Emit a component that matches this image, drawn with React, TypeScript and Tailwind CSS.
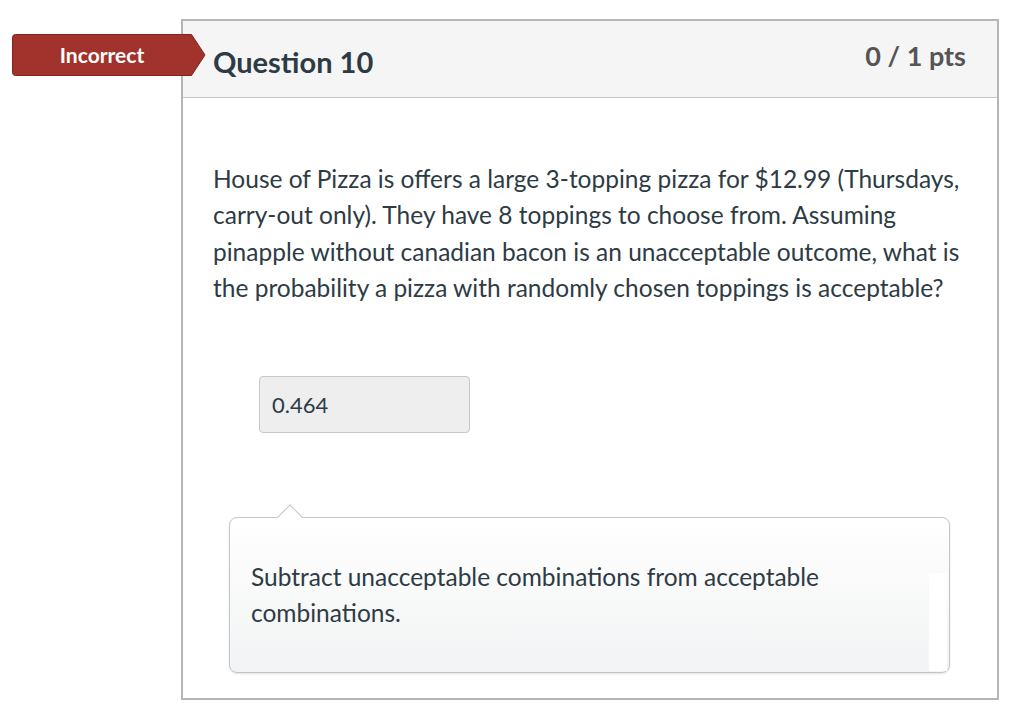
import React from 'react'

const QuestionCard: React.FC = () => {
  return (
    <div className="relative ml-[181px] mt-[18px] h-[681px] w-[818px] border-2 border-[#b5b5b5] bg-white">
      {/* Incorrect badge */}
      <div className="absolute -left-[171px] top-[13px] h-[42px] w-[194px]">
        <svg className="absolute inset-0" width="194" height="42" viewBox="0 0 194 42">
          <path
            d="M3.5 0.5 H179.5 L193 21 L179.5 41.5 H3.5 Q0.5 41.5 0.5 38.5 V3.5 Q0.5 0.5 3.5 0.5 Z"
            fill="#a2322c"
            stroke="#82231f"
            strokeWidth="1"
          />
        </svg>
        <div className="relative flex h-full w-[180px] items-center justify-center text-[21px] font-bold text-white">
          Incorrect
        </div>
      </div>

      {/* Header */}
      <div className="flex h-[77px] items-start justify-between border-b border-[#c4c4c4] bg-[#f5f5f5] pl-[30px] pr-[31px]">
        <h2 className="mt-[23px] text-[29px] font-bold leading-[36px] text-[#2d3b45]">Question 10</h2>
        <div className="mt-[17px] text-[27px] font-bold leading-[36px] text-[#555555]">0 / 1 pts</div>
      </div>

      {/* Body */}
      <div className="pl-[30px] pr-[30px] pt-[63px]">
        <p className="text-[24.5px] leading-[36.3px] text-[#2d3b45]">
          House of Pizza is offers a large 3-topping pizza for $12.99 (Thursdays, carry-out only). They have 8
          toppings to choose from. Assuming pinapple without canadian bacon is an unacceptable outcome, what is the
          probability a pizza with randomly chosen toppings is acceptable?
        </p>

        <div className="ml-[46px] mt-[70px] flex h-[57px] w-[211px] items-center rounded-[4px] border border-[#c8c8c8] bg-[#eeeeee] px-[12px] text-[22px] text-[#2d3b45]">
          0.464
        </div>

        {/* Comment */}
        <div className="relative ml-[16px] mt-[84px] w-[721px] rounded-[8px] border border-[#bfc6cc] bg-gradient-to-b from-white to-[#f2f3f4] pb-[40px] pl-[21px] pr-[21px] pt-[41px] shadow-[0_1px_2px_rgba(0,0,0,0.12)]">
          <div className="absolute -top-[10px] left-[51px] h-[18px] w-[18px] rotate-45 border-l border-t border-[#bfc6cc] bg-white" />
          <div className="absolute bottom-[1px] right-[2px] top-[55px] w-[18px] bg-white" />
          <p className="relative text-[24.5px] leading-[36.3px] text-[#2d3b45]">
            Subtract unacceptable combinations from acceptable combinations.
          </p>
        </div>
      </div>
    </div>
  )
}

export default function App() {
  return (
    <div className="min-h-[725px] w-[1024px] bg-white pt-0 font-['Lato',sans-serif]">
      <div className="h-px" />
      <QuestionCard />
    </div>
  )
}
